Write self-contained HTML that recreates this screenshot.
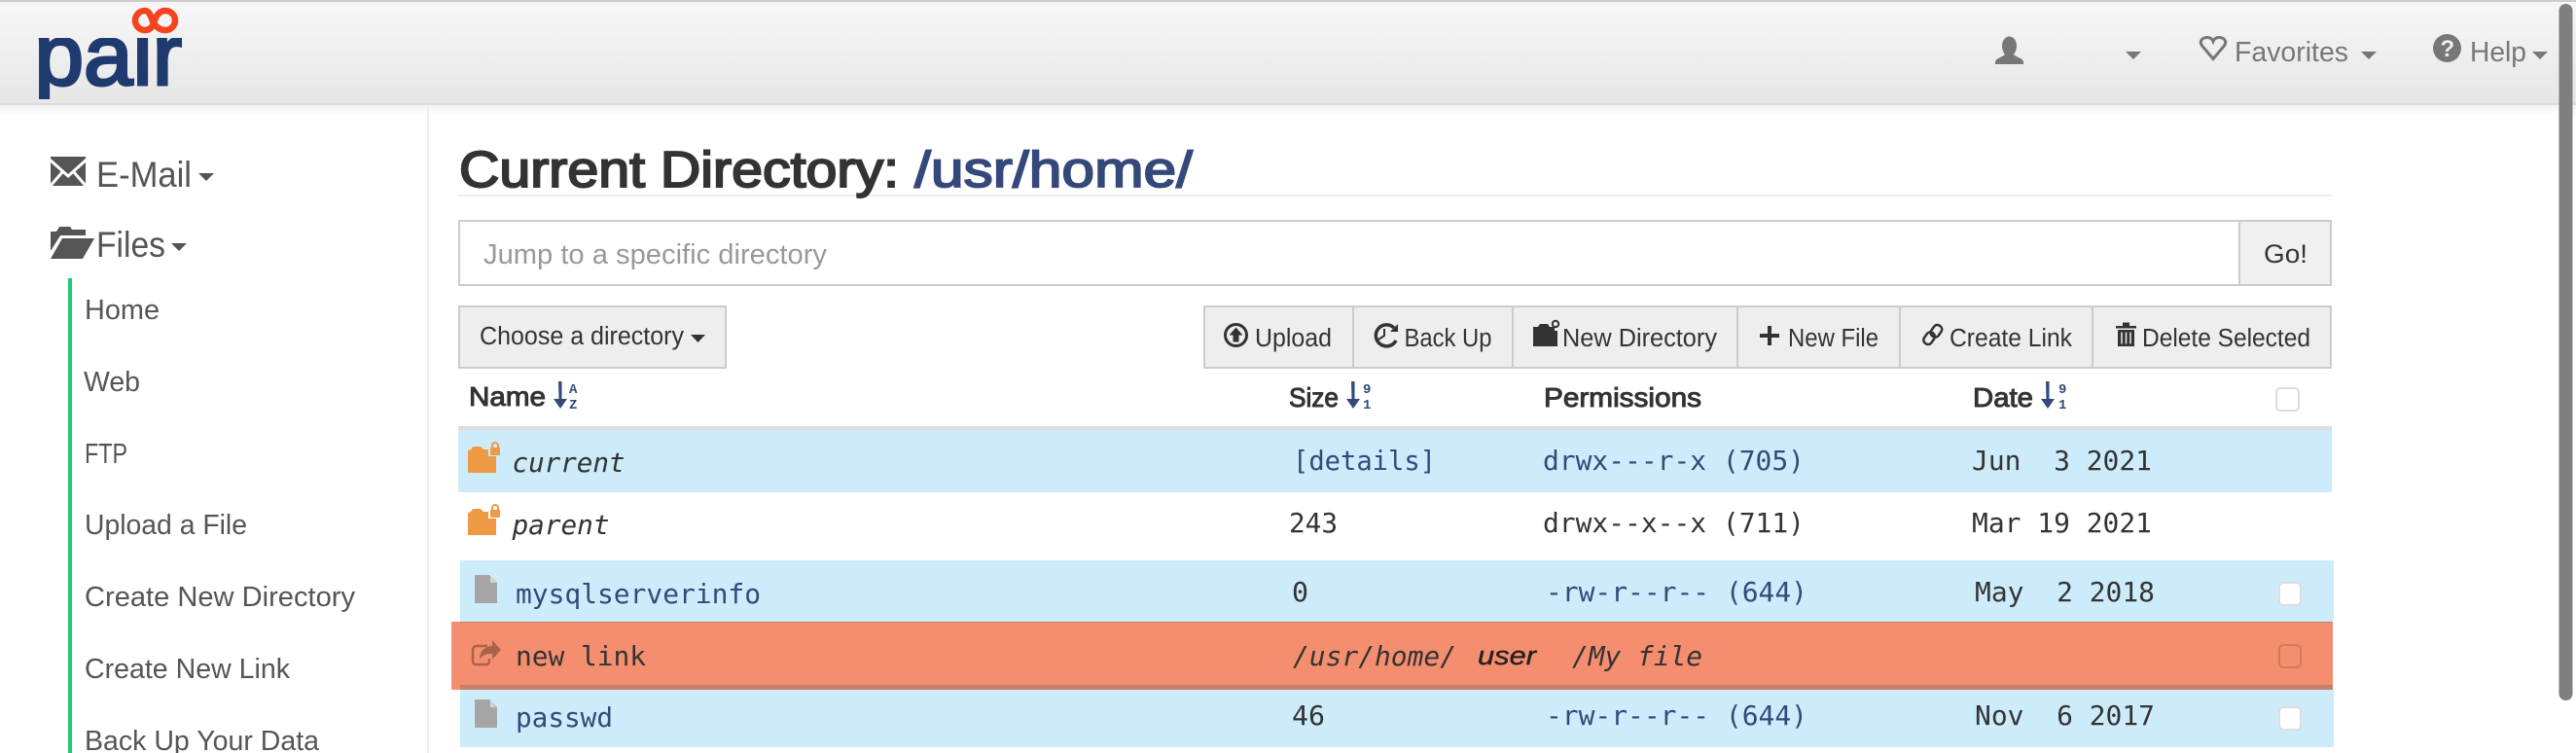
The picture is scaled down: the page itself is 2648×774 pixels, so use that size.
<!DOCTYPE html>
<html lang="en">
<head>
<meta charset="utf-8">
<title>Current Directory: /usr/home/</title>
<style>
html,body{margin:0;padding:0;background:#fff;width:2648px;height:774px;overflow:hidden}
svg{display:block}
text{white-space:pre;font-family:"Liberation Sans",sans-serif}
.m{font-family:"DejaVu Sans Mono",monospace;font-size:27.7px;fill:#333}
.b{fill:#34497a}
.i{font-style:italic}
.s{font-size:29px;fill:#555}
.n{font-size:28.5px;fill:#777}
.t{font-size:25.5px;fill:#333}
.h{font-size:27.5px;fill:#333;stroke:#333;stroke-width:1px}
.z{font-family:"Liberation Mono",monospace;font-size:14px;font-weight:bold;fill:#34497a}
</style>
</head>
<body>
<svg xmlns="http://www.w3.org/2000/svg" width="2648" height="774" viewBox="0 0 2648 774">
<defs>
<linearGradient id="hd" x1="0" y1="0" x2="0" y2="1"><stop offset="0" stop-color="#f7f7f7"/><stop offset="1" stop-color="#e6e6e6"/></linearGradient>
<linearGradient id="sh" x1="0" y1="0" x2="0" y2="1"><stop offset="0" stop-color="#f3f3f3"/><stop offset="1" stop-color="#fff"/></linearGradient>
<clipPath id="lc"><rect x="30" y="39" width="170" height="63"/></clipPath>
</defs>
<rect width="2648" height="774" fill="#fff"/>

<!-- header -->
<rect x="0" y="0" width="2648" height="108" fill="url(#hd)"/>
<rect x="0" y="0" width="2648" height="2" fill="#ccc"/>
<rect x="0" y="106" width="2648" height="2" fill="#ddd"/>
<rect x="0" y="108" width="2648" height="12" fill="url(#sh)"/>

<!-- logo -->
<text x="35.500" y="87" clip-path="url(#lc)" font-size="88" fill="#1f3a6e" stroke="#1f3a6e" stroke-width="3" textLength="151.500" lengthAdjust="spacingAndGlyphs">pair</text>
<path d="M157 22C155 16 153 11 149 11A10 10 0 0 0 149 31C153 31 156 29 158 24C160 16 164 11 170 11A10 10 0 0 1 170 31C165 31 161 29 157 22Z" fill="none" stroke="#f4431f" stroke-width="6.500"/>

<!-- top nav -->
<path d="M2058 47a7.500 9.500 0 1 1 15 0c0 4-1.500 7-3 9 3 3 10 4 10 8v2h-29v-2c0-4 7-5 10-8-1.500-2-3-5-3-9z" fill="#777"/>
<path d="M2185 53h16l-8 8z" fill="#777"/>
<path d="M2275 60.500L2264 47.500C2259.500 41.500 2265 38.500 2269 38.500C2272 38.500 2274 40 2275 42.500C2276 40 2278 38.500 2281 38.500C2285 38.500 2290.500 41.500 2286 47.500Z" fill="none" stroke="#777" stroke-width="3"/>
<text class="n" x="2297" y="63" textLength="117" lengthAdjust="spacingAndGlyphs">Favorites</text>
<path d="M2427 53h16l-8 8z" fill="#777"/>
<circle cx="2515.500" cy="49.500" r="14.500" fill="#777"/>
<text x="2508.500" y="58" font-size="24" font-weight="bold" fill="#eee">?</text>
<text class="n" x="2539" y="63" textLength="58" lengthAdjust="spacingAndGlyphs">Help</text>
<path d="M2603 53h16l-8 8z" fill="#777"/>

<!-- sidebar -->
<rect x="439" y="108" width="2" height="666" fill="#eee"/>
<path d="M52 161h36v30H52z" fill="#555"/>
<path d="M51 164L70 181L89 164M51 192L64 177M89 192L76 177" fill="none" stroke="#fff" stroke-width="3"/>
<text x="99" y="192" font-size="37" fill="#555" textLength="98" lengthAdjust="spacingAndGlyphs">E-Mail</text>
<path d="M204 178h16l-8 8z" fill="#555"/>
<path d="M52 258V238h6l3-5h11l2 3h14v6H62z" fill="#555"/>
<path d="M64 245H97L85 266H52z" fill="#555"/>
<text x="99" y="264" font-size="37" fill="#555" textLength="71" lengthAdjust="spacingAndGlyphs">Files</text>
<path d="M176 250h16l-8 8z" fill="#555"/>
<rect x="70" y="286" width="4" height="488" fill="#1ccb75"/>
<text class="s" x="87" y="328" textLength="77" lengthAdjust="spacingAndGlyphs">Home</text>
<text class="s" x="86" y="402" textLength="58" lengthAdjust="spacingAndGlyphs">Web</text>
<text class="s" x="87" y="476" textLength="44" lengthAdjust="spacingAndGlyphs">FTP</text>
<text class="s" x="87" y="549" textLength="167" lengthAdjust="spacingAndGlyphs">Upload a File</text>
<text class="s" x="87" y="623" textLength="278" lengthAdjust="spacingAndGlyphs">Create New Directory</text>
<text class="s" x="87" y="697" textLength="211" lengthAdjust="spacingAndGlyphs">Create New Link</text>
<text class="s" x="87" y="771" textLength="241" lengthAdjust="spacingAndGlyphs">Back Up Your Data</text>

<!-- title -->
<rect x="471" y="200" width="1926" height="2" fill="#eee"/>
<text x="472" y="192" font-size="52" fill="#333" stroke="#333" stroke-width="2" textLength="452" lengthAdjust="spacingAndGlyphs">Current Directory:</text>
<text x="940" y="192" font-size="52" fill="#34497a" stroke="#34497a" stroke-width="1.800" textLength="286" lengthAdjust="spacingAndGlyphs">/usr/home/</text>

<!-- jump input -->
<rect x="472" y="227" width="1924" height="66" fill="#fff" stroke="#ccc" stroke-width="2"/>
<rect x="2302" y="227" width="94" height="66" fill="#f0f0f0" stroke="#ccc" stroke-width="2"/>
<text x="497" y="271" font-size="29" fill="#999" textLength="353" lengthAdjust="spacingAndGlyphs">Jump to a specific directory</text>
<text x="2327" y="270" font-size="27" fill="#333" textLength="45" lengthAdjust="spacingAndGlyphs">Go!</text>

<!-- choose -->
<rect x="472" y="315" width="274" height="63" fill="#eee" stroke="#ccc" stroke-width="2"/>
<text class="t" x="493" y="354" textLength="210" lengthAdjust="spacingAndGlyphs">Choose a directory</text>
<path d="M710 344h15l-7.500 8z" fill="#333"/>

<!-- toolbar -->
<rect x="1238" y="315" width="1158" height="63" fill="#eee" stroke="#ccc" stroke-width="2"/>
<path d="M1391 315v63M1555 315v63M1786 315v63M1953 315v63M2151 315v63" stroke="#ccc" stroke-width="2"/>

<circle cx="1270.500" cy="344.500" r="11" fill="none" stroke="#333" stroke-width="3"/>
<path d="M1270.500 336.500l7 8h-4v7h-6v-7h-4z" fill="#333"/>
<text class="t" x="1290" y="356" textLength="79" lengthAdjust="spacingAndGlyphs">Upload</text>

<path d="M1433 337A11 11 0 1 0 1435 350" fill="none" stroke="#333" stroke-width="3.500"/>
<path d="M1429 341h8v-8z" fill="#333"/>
<path d="M1423 338v7l-6 4" fill="none" stroke="#333" stroke-width="2"/>
<text class="t" x="1443.500" y="356" textLength="90" lengthAdjust="spacingAndGlyphs">Back Up</text>

<path d="M1576 356V336h5l2-3h8l2 3h5v4h3v16z" fill="#333"/>
<circle cx="1599" cy="333" r="3.200" fill="none" stroke="#333" stroke-width="2"/>
<text class="t" x="1606" y="356" textLength="159" lengthAdjust="spacingAndGlyphs">New Directory</text>

<path d="M1809 343h8v-8h4v8h8v4h-8v8h-4v-8h-8z" fill="#333"/>
<text class="t" x="1838" y="356" textLength="93" lengthAdjust="spacingAndGlyphs">New File</text>

<g fill="none" stroke="#333" stroke-width="2.500">
<rect x="1986" y="333.500" width="9" height="13" rx="4" transform="rotate(35 1990 340)"/>
<rect x="1979" y="341" width="9" height="13" rx="4" transform="rotate(35 1983 347)"/>
</g>
<text class="t" x="2004" y="356" textLength="126" lengthAdjust="spacingAndGlyphs">Create Link</text>

<path d="M2175 335h7v-3.500h7v3.500h7v2.500h-21z" fill="#333"/>
<path d="M2177 339h17v17h-17z" fill="#333"/>
<path d="M2181 341.500v12M2185.500 341.500v12M2190 341.500v12" stroke="#eee" stroke-width="1.500"/>
<text class="t" x="2202" y="356" textLength="173" lengthAdjust="spacingAndGlyphs">Delete Selected</text>

<!-- table head -->
<text class="h" x="482" y="417" textLength="79" lengthAdjust="spacingAndGlyphs">Name</text>
<path d="M574 392h3.500v18h5.500l-7 10-7-10h5.500z" fill="#34497a"/>
<text class="z" x="585" y="404">A</text><text class="z" x="585" y="420">Z</text>

<text class="h" x="1325" y="418" textLength="51" lengthAdjust="spacingAndGlyphs">Size</text>
<path d="M1389 392h3.500v18h5.500l-7 10-7-10h5.500z" fill="#34497a"/>
<text class="z" x="1401" y="404">9</text><text class="z" x="1401" y="420">1</text>

<text class="h" x="1587" y="418" textLength="162" lengthAdjust="spacingAndGlyphs">Permissions</text>

<text class="h" x="2028" y="418" textLength="62" lengthAdjust="spacingAndGlyphs">Date</text>
<path d="M2103 392h3.500v18h5.500l-7 10-7-10h5.500z" fill="#34497a"/>
<text class="z" x="2116" y="404">9</text><text class="z" x="2116" y="420">1</text>

<rect x="2340" y="399" width="23" height="23" rx="4" fill="#fff" stroke="#ddd" stroke-width="2"/>
<rect x="471" y="438" width="1926" height="4" fill="#ddd"/>

<!-- rows -->
<rect x="471" y="442" width="1926" height="64" fill="#cdecfb"/>
<rect x="473" y="576" width="1926" height="63" fill="#cdecfb"/>
<rect x="473" y="709" width="1926" height="59" fill="#cdecfb"/>
<rect x="464" y="639" width="1934" height="70" fill="#f58e6e"/>
<rect x="473" y="639" width="1925" height="1" fill="#b9836e"/>
<rect x="473" y="704" width="1925" height="5" fill="#c48068"/>

<!-- row 1 -->
<g fill="#ee9a45">
<path d="M481 486V463l3-1 2-3h8l3 3h5v7h8v17z"/>
<rect x="504" y="460" width="10" height="8" rx="1"/>
<path d="M506 460v-2a3 3 0 0 1 6 0v2" fill="none" stroke="#ee9a45" stroke-width="2"/>
</g>
<text class="m i" x="526.500" y="485" textLength="116" lengthAdjust="spacingAndGlyphs">current</text>
<text class="m b" x="1329" y="483" textLength="147" lengthAdjust="spacingAndGlyphs">[details]</text>
<text class="m b" x="1586" y="483" textLength="269" lengthAdjust="spacingAndGlyphs">drwx---r-x (705)</text>
<text class="m" x="2027" y="483" textLength="185" lengthAdjust="spacingAndGlyphs">Jun  3 2021</text>

<!-- row 2 -->
<g fill="#ee9a45">
<path d="M481 550V527l3-1 2-3h8l3 3h5v7h8v17z"/>
<rect x="504" y="524" width="10" height="8" rx="1"/>
<path d="M506 524v-2a3 3 0 0 1 6 0v2" fill="none" stroke="#ee9a45" stroke-width="2"/>
</g>
<text class="m i" x="526.500" y="549" textLength="100" lengthAdjust="spacingAndGlyphs">parent</text>
<text class="m" x="1325" y="547" textLength="50" lengthAdjust="spacingAndGlyphs">243</text>
<text class="m" x="1586" y="547" textLength="269" lengthAdjust="spacingAndGlyphs">drwx--x--x (711)</text>
<text class="m" x="2027" y="547" textLength="185" lengthAdjust="spacingAndGlyphs">Mar 19 2021</text>

<!-- row 3 -->
<path d="M488 591h15l8 8v21h-23z" fill="#a6a6a6"/>
<path d="M504 592l6 7h-6z" fill="#d4d4d4"/>
<text class="m b" x="530" y="620" textLength="252" lengthAdjust="spacingAndGlyphs">mysqlserverinfo</text>
<text class="m" x="1328" y="618" textLength="17" lengthAdjust="spacingAndGlyphs">0</text>
<text class="m b" x="1589" y="618" textLength="269" lengthAdjust="spacingAndGlyphs">-rw-r--r-- (644)</text>
<text class="m" x="2030" y="618" textLength="185" lengthAdjust="spacingAndGlyphs">May  2 2018</text>
<rect x="2343" y="599" width="22" height="23" rx="4" fill="#fff" stroke="#ddd" stroke-width="2"/>

<!-- row 4 -->
<path d="M501 664h-11a4 4 0 0 0-4 4v12a3 3 0 0 0 3 3h11a3 3 0 0 0 3-3v-3" fill="none" stroke="#a9634c" stroke-width="2.500"/>
<path d="M506 658l9 10-9 10v-6c-6 0-10 1-13 6 0-8 5-14 13-14z" fill="#a9634c"/>
<text class="m" x="530" y="684" textLength="134" lengthAdjust="spacingAndGlyphs" fill="#222">new link</text>
<text class="m i" x="1329" y="684" textLength="168" lengthAdjust="spacingAndGlyphs">/usr/home/</text>
<text class="i" x="1519" y="683" font-size="27" fill="#222" stroke="#222" stroke-width=".4" textLength="60" lengthAdjust="spacingAndGlyphs">user</text>
<text class="m i" x="1616" y="684" textLength="134" lengthAdjust="spacingAndGlyphs">/My file</text>
<rect x="2343" y="663" width="22" height="23" rx="4" fill="#f58e6e" stroke="#cf7a5e" stroke-width="2"/>

<!-- row 5 -->
<path d="M488 719h15l8 8v21h-23z" fill="#a6a6a6"/>
<path d="M504 720l6 7h-6z" fill="#d4d4d4"/>
<text class="m b" x="530" y="747" textLength="100" lengthAdjust="spacingAndGlyphs">passwd</text>
<text class="m" x="1328" y="745" textLength="34" lengthAdjust="spacingAndGlyphs">46</text>
<text class="m b" x="1589" y="745" textLength="269" lengthAdjust="spacingAndGlyphs">-rw-r--r-- (644)</text>
<text class="m" x="2030" y="745" textLength="185" lengthAdjust="spacingAndGlyphs">Nov  6 2017</text>
<rect x="2343" y="727" width="22" height="23" rx="4" fill="#fff" stroke="#ddd" stroke-width="2"/>

<!-- scrollbar -->
<rect x="2630.500" y="4" width="14" height="716" rx="7" fill="#7f7f7f"/>
</svg>
</body>
</html>
